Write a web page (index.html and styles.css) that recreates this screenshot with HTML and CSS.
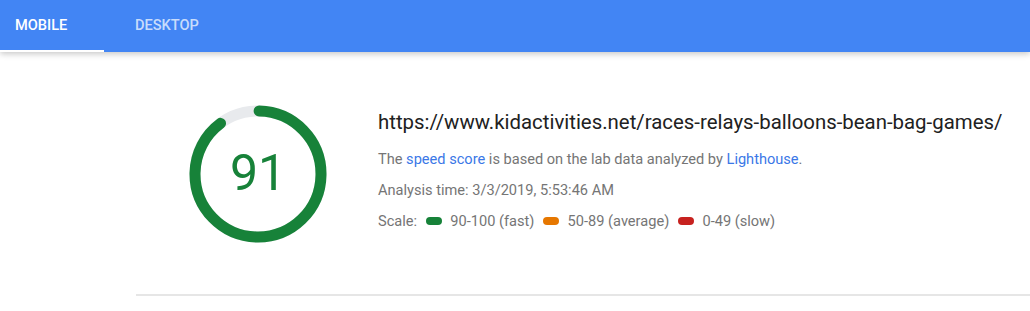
FILE: index.html
```html
<!DOCTYPE html>
<html lang="en">
  <head>
    <meta charset="UTF-8" />
    <title>PageSpeed Insights</title>
    <link rel="stylesheet" href="styles.css">
  </head>
  <body>
    <div class="tabs">
      <div class="tab active">MOBILE</div>
      <div class="tab">DESKTOP</div>
    </div>

    <div class="summary">
      <div class="gauge">
        <svg width="140" height="140" viewBox="0 0 140 140">
          <circle cx="70" cy="70" r="63" fill="none" stroke="#e8eaed" stroke-width="11" />
          <!-- 91% arc, starts at 12 o'clock -->
          <circle cx="70" cy="70" r="63" fill="none" stroke="#178239"
            stroke-width="11" stroke-linecap="round"
            stroke-dasharray="354 396" transform="rotate(-89 70 70)" />
        </svg>
        <span class="score">91</span>
      </div>

      <div class="info">
        <div class="url">https://www.kidactivities.net/races-relays-balloons-bean-bag-games/</div>
        <div class="line">The <a href="#">speed score</a> is based on the lab data analyzed by <a href="#">Lighthouse</a>.</div>
        <div class="line">Analysis time: 3/3/2019, 5:53:46 AM</div>
        <div class="line scale">
          Scale:
          <span class="pill fast"></span> 90-100 (fast)
          <span class="pill average"></span> 50-89 (average)
          <span class="pill slow"></span> 0-49 (slow)
        </div>
      </div>
    </div>

    <div class="divider"></div>
  </body>
</html>
```

FILE: styles.css
```css
body {
  margin: 0;
  font-family: Roboto, "Liberation Sans", sans-serif;
  background: #fff;
  overflow: hidden;
}
.tabs {
  display: flex;
  gap: 16px;
  height: 52px;
  background: #4285f4;
  box-shadow: 0 2px 6px rgba(0, 0, 0, 0.22);
}
.tab {
  box-sizing: border-box;
  min-width: 104px;
  padding: 0 15px;
  line-height: 50px;
  font-size: 14.6px;
  font-weight: 500;
  color: rgba(255, 255, 255, 0.72);
  border-bottom: 2px solid transparent;
}
.tab.active {
  color: #fff;
  border-bottom-color: #fff;
}
.summary {
  display: flex;
  align-items: flex-start;
  padding: 52px 0 0 188px;
  height: 190px;
}
.gauge {
  position: relative;
  width: 140px;
  height: 140px;
}
.gauge svg {
  display: block;
}
.score {
  position: absolute;
  left: 0;
  right: 0;
  top: 40px;
  text-align: center;
  font-size: 50px;
  color: #178239;
}
.info {
  margin-left: 50px;
  padding-top: 6px;
}
.url {
  font-size: 20.4px;
  color: #212121;
  margin-bottom: 16px;
}
.line {
  font-size: 14.6px;
  color: #757575;
  margin-bottom: 13px;
}
.line a {
  color: #3b78e7;
  text-decoration: none;
}
.pill {
  display: inline-block;
  width: 16px;
  height: 8px;
  border-radius: 4px;
  margin: 0 5px;
  vertical-align: 1px;
}
.fast {
  background: #178239;
}
.average {
  background: #e67700;
}
.slow {
  background: #c7221f;
}
.divider {
  margin-left: 136px;
  border-top: 2px solid #e6e6e6;
}
```
